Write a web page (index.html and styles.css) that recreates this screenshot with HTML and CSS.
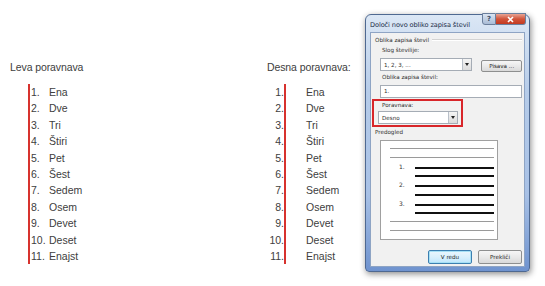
FILE: index.html
```html
<!DOCTYPE html>
<html lang="sl">
<head>
    <meta charset="UTF-8">
    <title>Poravnava številčenja</title>
    <link rel="stylesheet" href="styles.css">
</head>
<body>
    <div class="page">
        <div class="doc doc-left">
            <p class="heading">Leva poravnava</p>
            <ol class="list list-left">
                <li><span class="num">1.</span><span class="word">Ena</span></li>
                <li><span class="num">2.</span><span class="word">Dve</span></li>
                <li><span class="num">3.</span><span class="word">Tri</span></li>
                <li><span class="num">4.</span><span class="word">Štiri</span></li>
                <li><span class="num">5.</span><span class="word">Pet</span></li>
                <li><span class="num">6.</span><span class="word">Šest</span></li>
                <li><span class="num">7.</span><span class="word">Sedem</span></li>
                <li><span class="num">8.</span><span class="word">Osem</span></li>
                <li><span class="num">9.</span><span class="word">Devet</span></li>
                <li><span class="num">10.</span><span class="word">Deset</span></li>
                <li><span class="num">11.</span><span class="word">Enajst</span></li>
            </ol>
        </div>

        <div class="doc doc-right">
            <p class="heading">Desna poravnava:</p>
            <ol class="list list-right">
                <li><span class="num">1.</span><span class="word">Ena</span></li>
                <li><span class="num">2.</span><span class="word">Dve</span></li>
                <li><span class="num">3.</span><span class="word">Tri</span></li>
                <li><span class="num">4.</span><span class="word">Štiri</span></li>
                <li><span class="num">5.</span><span class="word">Pet</span></li>
                <li><span class="num">6.</span><span class="word">Šest</span></li>
                <li><span class="num">7.</span><span class="word">Sedem</span></li>
                <li><span class="num">8.</span><span class="word">Osem</span></li>
                <li><span class="num">9.</span><span class="word">Devet</span></li>
                <li><span class="num">10.</span><span class="word">Deset</span></li>
                <li><span class="num">11.</span><span class="word">Enajst</span></li>
            </ol>
        </div>

        <div class="dialog">
            <div class="titlebar">
                <span class="title">Določi novo obliko zapisa števil</span>
                <div class="caption-buttons">
                    <span class="cap-btn cap-help">?</span>
                    <span class="cap-btn cap-close">
                        <svg width="9" height="7" viewBox="0 0 9 7"><path d="M2 1 L7 6 M7 1 L2 6" stroke="#fff" stroke-width="1.6"/></svg>
                    </span>
                </div>
            </div>
            <div class="client">
                <div class="group-title"><span>Oblika zapisa števil</span><span class="etch"></span></div>

                <label class="field-label lbl-slog">Slog številije:</label>
                <div class="row">
                    <div class="combo combo-slog"><span class="combo-text">1, 2, 3, ...</span><span class="combo-arrow"></span></div>
                    <span class="btn btn-pisava">Pisava ...</span>
                </div>

                <label class="field-label lbl-oblika">Oblika zapisa števil:</label>
                <div class="textbox">1.</div>

                <div class="highlight">
                    <label class="field-label lbl-porav">Poravnava:</label>
                    <div class="combo combo-porav"><span class="combo-text">Desno</span><span class="combo-arrow"></span></div>
                </div>

                <div class="group-title preview-title"><span>Predogled</span></div>
                <div class="preview">
                    <span class="pline gray"></span>
                    <span class="pline gray"></span>
                    <div class="pitem"><span class="pnum">1.</span><span class="pline black"></span></div>
                    <span class="pline black indent"></span>
                    <div class="pitem"><span class="pnum">2.</span><span class="pline black"></span></div>
                    <span class="pline black indent"></span>
                    <div class="pitem"><span class="pnum">3.</span><span class="pline black"></span></div>
                    <span class="pline black indent"></span>
                    <span class="pline gray"></span>
                    <span class="pline gray"></span>
                </div>

                <div class="actions">
                    <span class="btn btn-default">V redu</span>
                    <span class="btn">Prekliči</span>
                </div>
            </div>
        </div>
    </div>
</body>
</html>
```

FILE: styles.css
```css
body {
    margin: 0;
    background-color: #fff;
    font-family: "Liberation Sans", Arial, sans-serif;
    color: #404040;
}

.page {
    display: flex;
    align-items: flex-start;
    width: 545px;
    height: 286px;
    overflow: hidden;
}

.doc {
    padding-top: 60px;
}

.doc-left {
    margin-left: 10px;
    width: 257px;
}

.doc-right {
    width: 98px;
}

.heading {
    margin: 0 0 10px 0;
    font-size: 10.5px;
    line-height: 14px;
    letter-spacing: -0.1px;
}

.list {
    list-style: none;
    margin: 0;
    padding: 0;
    font-size: 10.5px;
}

.list li {
    display: flex;
    height: 16.4px;
    line-height: 16.4px;
}

.list-left {
    margin-left: 18px;
    border-left: 2px solid #d7322e;
}

.list-left .num {
    width: 18px;
    padding-left: 1px;
}

.list-right .num {
    width: 17px;
    text-align: right;
    border-right: 2px solid #d7322e;
}

.list-right .word {
    margin-left: 20px;
}

/* dialog window */

.dialog {
    margin-top: 14px;
    width: 165px;
    height: 258px;
    box-sizing: border-box;
    border: 1px solid #4f6991;
    border-radius: 6px 6px 4px 4px;
    background: linear-gradient(#dbe7f5, #b6cce9 30%, #a8c1e6 70%, #6f93cf);
    box-shadow: 1px 2px 6px rgba(0, 0, 0, 0.45);
    display: flex;
    flex-direction: column;
    padding: 0 4px 4px 4px;
    font-family: "DejaVu Sans", sans-serif;
}

.titlebar {
    display: flex;
    justify-content: space-between;
    align-items: flex-start;
    height: 17px;
}

.title {
    font-size: 6.6px;
    color: #1b2d48;
    margin-top: 6px;
    letter-spacing: -0.1px;
}

.caption-buttons {
    display: flex;
    margin-top: -2px;
    margin-right: -1px;
}

.cap-btn {
    display: flex;
    align-items: center;
    justify-content: center;
    height: 10px;
    border: 1px solid #6b7f9c;
    font-size: 7px;
    color: #fff;
}

.cap-help {
    width: 12px;
    border-radius: 0 0 0 3px;
    background: linear-gradient(#d9e4f1, #a9bcd6);
    color: #3a4c66;
    font-weight: bold;
}

.cap-close {
    width: 29px;
    border-left: none;
    border-radius: 0 0 3px 0;
    background: linear-gradient(#e9a493, #d1543a 50%, #c43a20);
}

.client {
    flex: 1;
    background-color: #f1f1f1;
    border: 1px solid #8ea4c4;
    font-size: 5.6px;
    color: #2d2d2d;
    padding: 0 2px;
}

.group-title {
    display: flex;
    align-items: center;
    gap: 3px;
    margin-top: 2px;
    height: 9px;
    margin-left: 2px;
}

.etch {
    flex: 1;
    border-top: 1px solid #d3d3d3;
    border-bottom: 1px solid #fff;
}

.field-label {
    display: block;
    height: 9px;
    line-height: 9px;
    margin-left: 9px;
}

.lbl-slog {
    margin-top: 2px;
}

.row {
    display: flex;
    align-items: flex-start;
    gap: 9px;
    margin-top: 3px;
    margin-left: 7px;
}

.combo {
    display: flex;
    justify-content: space-between;
    align-items: center;
    height: 13px;
    box-sizing: border-box;
    border: 1px solid #a5acb5;
    background-color: #fff;
    padding-left: 3px;
}

.combo-slog {
    width: 93px;
}

.combo-arrow {
    width: 9px;
    height: 11px;
    box-sizing: border-box;
    border-left: 1px solid #b9c0c9;
    background: linear-gradient(#f4f4f4, #dcdcdc);
    position: relative;
}

.combo-arrow::after {
    content: "";
    position: absolute;
    left: 2px;
    top: 4px;
    border-left: 2px solid transparent;
    border-right: 2px solid transparent;
    border-top: 3px solid #222;
}

.btn {
    display: flex;
    align-items: center;
    justify-content: center;
    width: 44px;
    height: 14px;
    box-sizing: border-box;
    border: 1px solid #8e8f8f;
    border-radius: 2px;
    background: linear-gradient(#f6f6f6, #e9e9e9 50%, #d9d9d9);
    color: #222;
}

.btn-pisava {
    width: 41px;
    height: 12px;
    margin-top: 2px;
}

.lbl-oblika {
    margin-top: 1px;
}

.textbox {
    height: 13px;
    box-sizing: border-box;
    margin: 3px 0 0 7px;
    border: 1px solid #a5acb5;
    background-color: #fff;
    padding-left: 3px;
    line-height: 11px;
}

.highlight {
    width: 91px;
    height: 28px;
    box-sizing: border-box;
    margin-top: 1px;
    margin-left: -1px;
    border: 2px solid #d8262a;
}

.lbl-porav {
    margin-left: 8px;
    margin-top: 0;
}

.combo-porav {
    width: 80px;
    margin-left: 4px;
    margin-top: 1px;
}

.preview-title {
    margin-top: 0;
    margin-left: 2px;
}

.preview {
    display: flex;
    flex-direction: column;
    align-items: flex-start;
    width: 118px;
    height: 100px;
    box-sizing: border-box;
    margin: 4px 0 0 7px;
    border: 1px solid #a0a0a0;
    background-color: #fff;
    padding: 7px 0 0 9px;
}

.pline {
    display: block;
    height: 9.6px;
    box-sizing: border-box;
}

.pline.gray {
    width: 104px;
    border-top: 1.5px solid #9a9a9a;
}

.pline.black {
    width: 79px;
    border-top: 2px solid #111;
}

.pline.indent {
    margin-left: 25px;
}

.pitem {
    display: flex;
    align-items: flex-start;
    margin-top: 1px;
}

.pnum {
    width: 25px;
    padding-left: 9px;
    box-sizing: border-box;
    margin-top: -3px;
    line-height: 6px;
    font-size: 6px;
    color: #333;
}

.pitem + .pline {
    margin-top: -1px;
}

.actions {
    display: flex;
    justify-content: flex-end;
    gap: 6px;
    margin-top: 10px;
    margin-right: 0;
}

.btn-default {
    border-color: #3c7fb1;
    box-shadow: inset 0 0 0 1px #a6e0f5;
    background: linear-gradient(#eaf6fd, #d9f0fc 50%, #bee6fd);
}
```
